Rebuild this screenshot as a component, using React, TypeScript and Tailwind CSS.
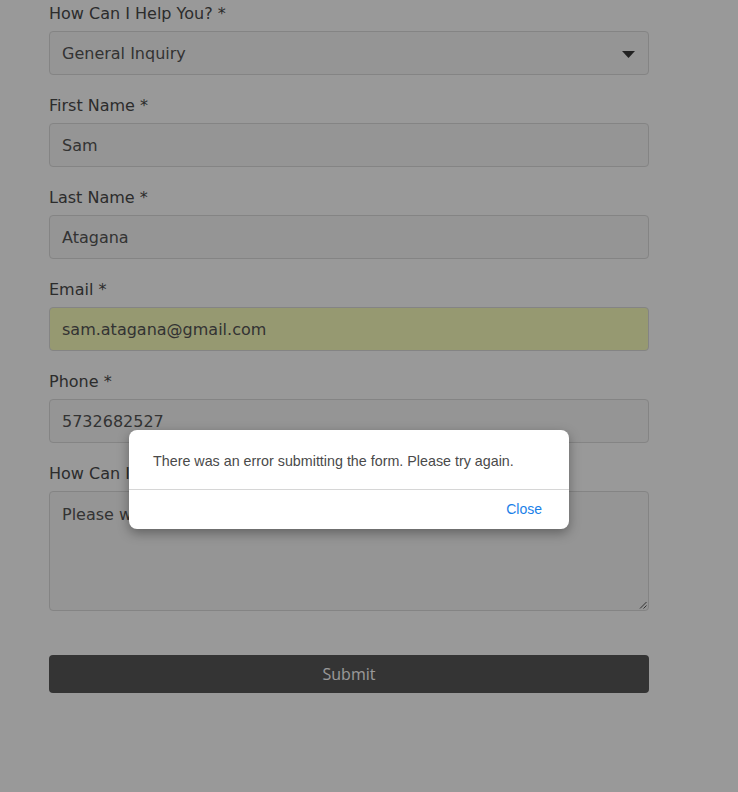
import React from 'react';

const labelCls = 'block h-6 leading-[26px] text-[16px] text-[#4a4a4a] mb-[6px]';
const inputCls =
  'block w-full h-[44px] rounded-[4px] border border-[#dcdcdc] bg-[#f9f9f9] px-3 pt-[2px] text-[16px] text-[#555] outline-none';

function Field({ label, value, autofill }: { label: string; value: string; autofill?: boolean }) {
  return (
    <div className="mb-[18px]">
      <label className={labelCls}>{label}</label>
      <div
        className={`${inputCls} flex items-center ${autofill ? 'bg-[#faffbd] text-[#111]' : ''}`}
      >
        {value}
      </div>
    </div>
  );
}

export default function App() {
  return (
    <div
      className="relative min-h-[792px] bg-white"
      style={{ fontFamily: '"DejaVu Sans", "Open Sans", sans-serif' }}
    >
      <form className="w-[600px] ml-[49px] pt-[1px]">
        <div className="mb-[18px]">
          <label className={labelCls}>How Can I Help You? *</label>
          <div className={`${inputCls} flex items-center justify-between pr-[12px]`}>
            <span>General Inquiry</span>
            <svg width="13" height="7" viewBox="0 0 13 7" className="mr-[1px]">
              <path d="M0 0h13L6.5 7z" fill="#3a3a3a" />
            </svg>
          </div>
        </div>

        <Field label="First Name *" value="Sam" />
        <Field label="Last Name *" value="Atagana" />
        <Field label="Email *" value="sam.atagana@gmail.com" autofill />
        <Field label="Phone *" value="5732682527" />

        <div>
          <label className={labelCls}>How Can I Help You? *</label>
          <div className="relative h-[120px] rounded-[4px] border border-[#dcdcdc] bg-[#f9f9f9] px-3 pt-[11px] text-[16px] text-[#555]">
            Please write your message here...
            <svg width="8" height="8" viewBox="0 0 8 8" className="absolute right-[1px] bottom-[1px]">
              <path d="M7.5 1L1 7.5M7.5 4.5L4.5 7.5" stroke="#555" strokeWidth="1" />
            </svg>
          </div>
        </div>

        <button
          type="button"
          className="mt-[44px] block w-full h-[38px] rounded-[4px] bg-[#575757] text-white text-[16px]"
          style={{ fontFamily: '"Open Sans", sans-serif' }}
        >
          Submit
        </button>
      </form>

      {/* overlay */}
      <div className="absolute inset-0 bg-black/40" />

      {/* dialog */}
      <div
        className="absolute left-[129px] top-[430px] w-[440px] rounded-[8px] bg-white shadow-[0_4px_12px_rgba(0,0,0,0.35)]"
        style={{ fontFamily: '"Liberation Sans", Arial, sans-serif' }}
      >
        <div className="px-6 pt-[21px] pb-[18px] text-[14.3px] leading-5 text-[#4a4a4a]">
          There was an error submitting the form. Please try again.
        </div>
        <div className="border-t border-[#d6d6d6] h-[40px] flex items-center justify-end pr-[27px]">
          <button type="button" className="text-[14px] text-[#1a7fe8]">
            Close
          </button>
        </div>
      </div>
    </div>
  );
}
